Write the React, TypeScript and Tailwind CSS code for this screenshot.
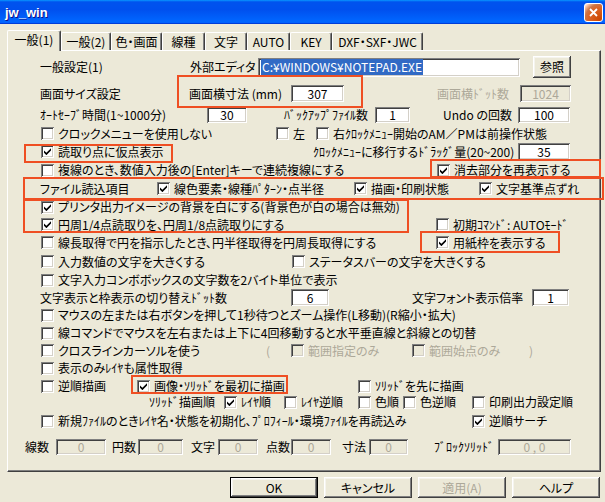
import type { ReactNode } from 'react';

const sunken =
    'shadow-[inset_1px_1px_#808080,inset_-1px_-1px_#ffffff,inset_2px_2px_#404040,inset_-2px_-2px_#d4d0c8]';
const raised =
    'shadow-[inset_-1px_-1px_#404040,inset_1px_1px_#ffffff,inset_-2px_-2px_#808080,inset_2px_2px_#f5f4ee]';

function Box({ checked = false, disabled = false }: { checked?: boolean; disabled?: boolean }) {
    return (
        <span
            className={`flex w-[13px] h-[13px] shrink-0 items-center justify-center ${sunken} ${
                disabled ? 'bg-[#ece9d8]' : 'bg-white'
            }`}
        >
            {checked && (
                <svg width="7" height="7" viewBox="0 0 7 7">
                    <path d="M0 2.4L2.4 4.8L7 0.2V2.6L2.4 7.2L0 4.8Z" fill="#000" />
                </svg>
            )}
        </span>
    );
}

function Check({
    checked = false,
    disabled = false,
    className = '',
    children,
}: {
    checked?: boolean;
    disabled?: boolean;
    className?: string;
    children: ReactNode;
}) {
    return (
        <div className={`flex items-center gap-[4px] shrink-0 whitespace-nowrap ${className}`}>
            <Box checked={checked} disabled={disabled} />
            <span className={disabled ? 'text-[#aca899]' : ''}>{children}</span>
        </div>
    );
}

function Field({
    className = '',
    disabled = false,
    children,
}: {
    className?: string;
    disabled?: boolean;
    children?: ReactNode;
}) {
    return (
        <div
            className={`flex items-center justify-center shrink-0 ${sunken} ${
                disabled ? 'bg-[#ece9d8] text-[#aca899]' : 'bg-white'
            } ${className}`}
        >
            {children}
        </div>
    );
}

function Btn({
    children,
    isDefault = false,
    disabled = false,
}: {
    children: ReactNode;
    isDefault?: boolean;
    disabled?: boolean;
}) {
    return (
        <div
            className={`flex w-[88px] h-[21px] items-center justify-center ${
                isDefault ? 'border border-black' : ''
            } ${raised} ${disabled ? 'text-[#aca899]' : ''}`}
        >
            {children}
        </div>
    );
}

const tabs = [
    { label: '一般(2)', w: 'w-[50px]' },
    { label: '色・画面', w: 'w-[51px]' },
    { label: '線種', w: 'w-[43px]' },
    { label: '文字', w: 'w-[42px]' },
    { label: 'AUTO', w: 'w-[43px]' },
    { label: 'KEY', w: 'w-[42px]' },
    { label: 'DXF・SXF・JWC', w: 'w-[91px]' },
];

export default function App() {
    return (
        <div className="relative w-[605px] h-[502px] overflow-hidden bg-[#ece9d8] text-[12px] leading-none text-black font-['Noto_Sans_CJK_JP',sans-serif] [font-feature-settings:'palt']">
            {/* title bar */}
            <div className="flex h-[24px] items-center justify-between pl-[5px] pr-[2px] bg-[linear-gradient(180deg,#0997ff,#0053ee_8%,#0050ee_40%,#0066ff_88%,#0066ff_93%,#005bff_95%,#003dd7_96%,#003dd7)]">
                <span className="text-white font-bold text-[13px] font-['Liberation_Sans',sans-serif] [text-shadow:1px_1px_#0f1089]">
                    jw_win
                </span>
                <div className="flex w-[19px] h-[19px] items-center justify-center rounded-[3px] border border-white bg-[radial-gradient(circle_at_90%_90%,#cc4600_0%,#dc6527_55%,#cd7546_70%,#ffccb2_90%,#ffffff_100%)]">
                    <svg width="9" height="9" viewBox="0 0 9 9">
                        <path d="M1 1L8 8M8 1L1 8" stroke="#fff" strokeWidth="1.8" />
                    </svg>
                </div>
            </div>

            {/* tabs */}
            <div className="flex items-end h-[20px] mt-[6px] pl-[7px]">
                <div className="relative z-10 flex w-[54px] h-[21px] -mb-[1px] items-center justify-center pb-[2px] bg-[#ece9d8] border-t border-l border-white border-r border-r-[#404040] rounded-t-[2px] shadow-[inset_-1px_0_#808080]">
                    一般(1)
                </div>
                {tabs.map((t) => (
                    <div
                        key={t.label}
                        className={`flex ${t.w} h-[18px] items-center justify-center border-t border-l border-white border-r border-r-[#404040] rounded-t-[2px] shadow-[inset_-1px_0_#808080] whitespace-nowrap`}
                    >
                        {t.label}
                    </div>
                ))}
            </div>

            {/* tab panel */}
            <div className="ml-[7px] w-[594px] h-[422px] pt-[1px] border border-t-white border-l-white border-r-[#404040] border-b-[#404040] shadow-[inset_-1px_-1px_#808080]">
                <div className="flex items-center h-[30px] pl-[32px]">
                    <div className="w-[150px] shrink-0">一般設定(1)</div>
                    <div className="w-[68px] shrink-0 whitespace-nowrap">外部エディタ</div>
                    <Field className="w-[262px] h-[19px] justify-start pl-[3px]">
                        <span className="bg-[#316ac5] text-white px-[1px] py-[2px]">C:¥WINDOWS¥NOTEPAD.EXE</span>
                    </Field>
                    <div className={`ml-[13px] flex w-[38px] h-[22px] items-center justify-center ${raised}`}>参照</div>
                </div>

                <div className="flex items-center h-[23px] pl-[32px]">
                    <div className="w-[149px] shrink-0">画面サイズ設定</div>
                    <div className="w-[102px] shrink-0 whitespace-nowrap">画面横寸法 (mm)</div>
                    <Field className="w-[53px] h-[17px]">307</Field>
                    <div className="ml-[93px] w-[83px] shrink-0 whitespace-nowrap text-[#aca899]">画面横ﾄﾞｯﾄ数</div>
                    <Field disabled className="w-[51px] h-[17px]">1024</Field>
                </div>

                <div className="flex items-center h-[20px] pl-[32px]">
                    <div className="w-[167px] shrink-0 whitespace-nowrap">ｵｰﾄｾｰﾌﾞ時間(1~1000分)</div>
                    <Field className="w-[40px] h-[16px]">30</Field>
                    <div className="ml-[37px] w-[91px] shrink-0 whitespace-nowrap">ﾊﾞｯｸｱｯﾌﾟﾌｧｲﾙ数</div>
                    <Field className="w-[35px] h-[16px]">1</Field>
                    <div className="ml-[33px] w-[75px] shrink-0 whitespace-nowrap">Undo の回数</div>
                    <Field className="w-[52px] h-[16px]">100</Field>
                </div>

                <div className="flex items-center h-[17px] pl-[33px]">
                    <Check className="w-[235px]">クロックメニューを使用しない</Check>
                    <Check className="w-[40px]">左</Check>
                    <Check>右ｸﾛｯｸﾒﾆｭｰ開始のAM／PMは前操作状態</Check>
                </div>

                <div className="flex items-center h-[19px] pl-[33px]">
                    <Check checked className="w-[272px]">読取り点に仮点表示</Check>
                    <div className="w-[205px] shrink-0 whitespace-nowrap">ｸﾛｯｸﾒﾆｭｰに移行するﾄﾞﾗｯｸﾞ量(20~200)</div>
                    <Field className="w-[52px] h-[17px]">35</Field>
                </div>

                <div className="flex items-center h-[18px] pl-[33px]">
                    <Check className="w-[396px]">複線のとき、数値入力後の[Enter]キーで連続複線にする</Check>
                    <Check checked>消去部分を再表示する</Check>
                </div>

                <div className="flex items-center h-[19px] pl-[32px]">
                    <div className="w-[117px] shrink-0">ファイル読込項目</div>
                    <Check checked className="w-[197px]">線色要素・線種ﾊﾟﾀｰﾝ・点半径</Check>
                    <Check checked className="w-[125px]">描画・印刷状態</Check>
                    <Check checked>文字基準点ずれ</Check>
                </div>

                <div className="flex items-center h-[18px] pl-[33px]">
                    <Check checked>プリンタ出力イメージの背景を白にする(背景色が白の場合は無効)</Check>
                </div>

                <div className="flex items-center h-[17px] pl-[33px]">
                    <Check checked className="w-[395px]">円周1/4点読取りを、円周1/8点読取りにする</Check>
                    <Check>初期ｺﾏﾝﾄﾞ: AUTOﾓｰﾄﾞ</Check>
                </div>

                <div className="flex items-center h-[19px] pl-[33px]">
                    <Check className="w-[395px]">線長取得で円を指示したとき、円半径取得を円周長取得にする</Check>
                    <Check checked>用紙枠を表示する</Check>
                </div>

                <div className="flex items-center h-[19px] pl-[33px]">
                    <Check className="w-[251px]">入力数値の文字を大きくする</Check>
                    <Check>ステータスバーの文字を大きくする</Check>
                </div>

                <div className="flex items-center h-[18px] pl-[33px]">
                    <Check>文字入力コンボボックスの文字数を2バイト単位で表示</Check>
                </div>

                <div className="flex items-center h-[17px] pl-[32px]">
                    <div className="w-[251px] shrink-0 whitespace-nowrap">文字表示と枠表示の切り替えﾄﾞｯﾄ数</div>
                    <Field className="w-[38px] h-[17px]">6</Field>
                    <div className="ml-[83px] w-[120px] shrink-0 whitespace-nowrap">文字フォント表示倍率</div>
                    <Field className="w-[37px] h-[17px]">1</Field>
                </div>

                <div className="flex items-center h-[18px] pl-[33px]">
                    <Check>マウスの左または右ボタンを押して1秒待つとズーム操作(L移動)(R縮小・拡大)</Check>
                </div>

                <div className="flex items-center h-[18px] pl-[33px]">
                    <Check>線コマンドでマウスを左右または上下に4回移動すると水平垂直線と斜線との切替</Check>
                </div>

                <div className="flex items-center h-[17px] pl-[33px]">
                    <Check className="w-[225px]">クロスラインカーソルを使う</Check>
                    <div className="w-[25px] shrink-0 text-[#aca899]">(</div>
                    <Check disabled className="w-[121px]">範囲指定のみ</Check>
                    <Check disabled className="w-[117px]">範囲始点のみ</Check>
                    <div className="text-[#aca899]">)</div>
                </div>

                <div className="flex items-center h-[18px] pl-[33px]">
                    <Check>表示のみﾚｲﾔも属性取得</Check>
                </div>

                <div className="flex items-center h-[18px] pl-[33px]">
                    <Check className="w-[96px]">逆順描画</Check>
                    <Check checked className="w-[221px]">画像・ｿﾘｯﾄﾞを最初に描画</Check>
                    <Check>ｿﾘｯﾄﾞを先に描画</Check>
                </div>

                <div className="flex items-center h-[14px] pl-[141px]">
                    <div className="w-[75px] shrink-0 whitespace-nowrap">ｿﾘｯﾄﾞ描画順</div>
                    <Check checked className="w-[60px]">ﾚｲﾔ順</Check>
                    <Check className="w-[74px]">ﾚｲﾔ逆順</Check>
                    <Check className="w-[45px]">色順</Check>
                    <Check className="w-[69px]">色逆順</Check>
                    <Check>印刷出力設定順</Check>
                </div>

                <div className="flex items-center h-[24px] pl-[33px]">
                    <Check className="w-[431px]">新規ﾌｧｲﾙのときﾚｲﾔ名・状態を初期化、ﾌﾟﾛﾌｨｰﾙ・環境ﾌｧｲﾙを再読込み</Check>
                    <Check checked>逆順サーチ</Check>
                </div>

                <div className="flex items-center h-[28px] pl-[17px]">
                    <div className="w-[31px] shrink-0">線数</div>
                    <Field disabled className="w-[50px] h-[16px]">0</Field>
                    <div className="ml-[6px] w-[26px] shrink-0">円数</div>
                    <Field disabled className="w-[45px] h-[16px]">0</Field>
                    <div className="ml-[8px] w-[27px] shrink-0">文字</div>
                    <Field disabled className="w-[40px] h-[16px]">0</Field>
                    <div className="ml-[8px] w-[25px] shrink-0">点数</div>
                    <Field disabled className="w-[40px] h-[16px]">0</Field>
                    <div className="ml-[11px] w-[27px] shrink-0">寸法</div>
                    <Field disabled className="w-[39px] h-[16px]">0</Field>
                    <div className="ml-[26px] w-[64px] shrink-0 whitespace-nowrap">ﾌﾞﾛｯｸｿﾘｯﾄﾞ</div>
                    <Field disabled className="w-[73px] h-[16px]">0 , 0</Field>
                </div>
            </div>

            {/* buttons */}
            <div className="flex gap-[6px] mt-[5px] pl-[230px]">
                <Btn isDefault>OK</Btn>
                <Btn>キャンセル</Btn>
                <Btn disabled>適用(A)</Btn>
                <Btn>ヘルプ</Btn>
            </div>

            {/* annotation boxes */}
            <div className="absolute left-[177px] top-[75px] w-[186px] h-[33px] border-2 border-[#ef4f23]" />
            <div className="absolute left-[24px] top-[144px] w-[149px] h-[19px] border-2 border-[#ef4f23]" />
            <div className="absolute left-[430px] top-[159px] w-[171px] h-[19px] border-2 border-[#ef4f23]" />
            <div className="absolute left-[23px] top-[177px] w-[581px] h-[23px] border-2 border-[#ef4f23]" />
            <div className="absolute left-[23px] top-[199px] w-[386px] h-[34px] border-2 border-[#ef4f23]" />
            <div className="absolute left-[420px] top-[231px] w-[140px] h-[22px] border-2 border-[#ef4f23]" />
            <div className="absolute left-[131px] top-[375px] w-[157px] h-[19px] border-2 border-[#ef4f23]" />
        </div>
    );
}
